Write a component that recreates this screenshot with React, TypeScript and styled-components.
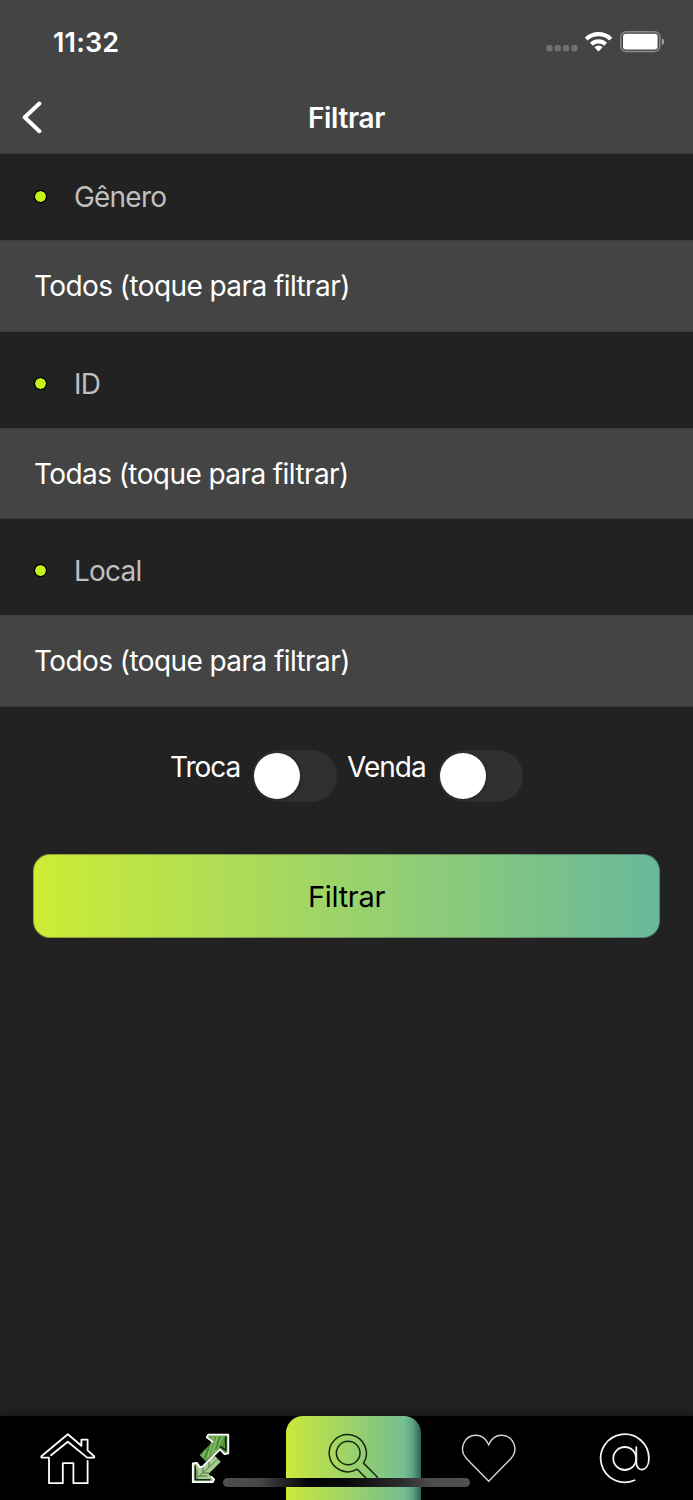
import React from "react";
import styled, { createGlobalStyle } from "styled-components";

const Global = createGlobalStyle`
  * { box-sizing: border-box; }
  body { margin: 0; background: #222; }
`;

const Screen = styled.div`
  position: relative;
  display: flex;
  flex-direction: column;
  width: 693px;
  height: 1500px;
  overflow: hidden;
  background: #222;
  color: #fff;
  font-family: Inter, "Liberation Sans", sans-serif;
  font-size: 28px;
  line-height: 34px;
`;

const Header = styled.header`
  height: 154px;
  background: #444;
  border-bottom: 1px solid #3a3a3a;
`;

const StatusBar = styled.div`
  display: flex;
  align-items: center;
  justify-content: space-between;
  height: 82px;
  padding: 2px 28px 0 53px;
`;

const Clock = styled.span`
  font-size: 27px;
  font-weight: 600;
  letter-spacing: 0.15px;
  padding-top: 1px;
`;

const TitleBar = styled.div`
  display: grid;
  grid-template-columns: 60px 1fr 60px;
  align-items: center;
  height: 71px;
`;

const BackButton = styled.button`
  display: flex;
  padding: 0 0 1px 20px;
  border: 0;
  background: none;
`;

const Title = styled.h1`
  margin: 0;
  font-size: 28px;
  font-weight: 600;
  letter-spacing: -0.35px;
  text-align: center;
`;

const SectionLabel = styled.div<{ $first?: boolean }>`
  display: flex;
  align-items: center;
  gap: 27px;
  height: ${(p) => (p.$first ? 86 : 96)}px;
  padding: ${(p) => (p.$first ? "0 34px 1px" : "8px 34px 0")};
  color: #bfbfbf;
  font-size: 28px;
  letter-spacing: -0.8px;
`;

const Dot = styled.i`
  width: 13px;
  height: 13px;
  margin-bottom: 1px;
  border: 1px solid #000;
  border-radius: 50%;
  background: #c4f21a;
  background-clip: padding-box;
  box-shadow: 0 0 1px #000;
`;

const FilterRow = styled.div<{ $height: number }>`
  display: flex;
  align-items: center;
  height: ${(p) => p.$height}px;
  padding: 0 34px;
  background: #444;
  border-top: 1px solid #3d3d3d;
  border-bottom: 1px solid #3a3a3a;
  letter-spacing: -0.58px;
`;

const Toggles = styled.div`
  display: flex;
  height: 147px;
  padding: 43px 0 0 170px;
`;

const ToggleLabel = styled.span<{ $width: number }>`
  width: ${(p) => p.$width}px;
  white-space: nowrap;
  letter-spacing: -1px;
`;

const Track = styled.span<{ $gap: number }>`
  width: 85px;
  height: 52px;
  margin-right: ${(p) => p.$gap}px;
  padding: 3px 2px;
  border-radius: 26px;
  background: #303030;
`;

const Knob = styled.span`
  display: block;
  width: 46px;
  height: 46px;
  border-radius: 50%;
  background: #fff;
  box-shadow: 0 1px 5px rgba(0, 0, 0, 0.3);
`;

const Submit = styled.button`
  height: 84px;
  margin: 0 33px;
  border: 1px solid rgba(60, 60, 60, 0.4);
  border-radius: 17px;
  background: linear-gradient(90deg, #cdec34, #9bd36b 50%, #68b89c) border-box;
  color: #000;
  font: 400 29px Inter, "Liberation Sans", sans-serif;
  letter-spacing: -0.3px;
`;

const NavBar = styled.nav`
  display: grid;
  grid-template-columns: 136px 150px 135px 136px 136px;
  height: 84px;
  margin-top: auto;
  background: #000;
  box-shadow: 0 0 14px rgba(0, 0, 0, 0.55);
`;

const NavItem = styled.a<{ $active?: boolean }>`
  display: flex;
  justify-content: center;
  padding-top: 16px;
  ${(p) =>
    p.$active &&
    `
    border-radius: 17px 17px 0 0;
    background:
      linear-gradient(90deg, rgba(15, 40, 35, 0) 88%, rgba(15, 40, 35, 0.18) 94%, rgba(15, 40, 35, 0.6)),
      linear-gradient(90deg, #cbe93b, #68b89c);
  `}
`;

const HomeIndicator = styled.div`
  position: absolute;
  left: 223px;
  bottom: 13px;
  width: 247px;
  height: 9px;
  border-radius: 5px;
  background: linear-gradient(90deg, #505050 0%, #454545 15%, #1c1c1c 27%, #000 36%, #080808 50%, #2c2c2c 72%, #4c4c4c 84%, #505050 100%);
`;

const SignalIcons = () => (
  <svg width="119" height="24" viewBox="546 30 119 24">
    <g fill="#707070">
      {[546.3, 554.6, 562.9, 571.3].map((x) => (
        <rect key={x} x={x} y="45.1" width="6.2" height="6.2" rx="1.8" />
      ))}
    </g>
    <g fill="none" stroke="#fff">
      <path d="M586.2 39.1a17.7 17.7 0 0 1 24.6 0" strokeWidth="4.1" />
      <path d="M591.4 44.2a10.3 10.3 0 0 1 14.2 0" strokeWidth="4.1" />
    </g>
    <path d="M598.5 51.6l-3.7-3.8q-.5-.6.2-1.1 3.5-2.3 7 0 .7.5.2 1.1z" fill="#fff" />
    <rect x="620.8" y="31.7" width="39" height="19.8" rx="5.4" fill="none" stroke="#8b8b8b" strokeWidth="1.5" />
    <rect x="623" y="33.8" width="34.6" height="15.6" rx="3" fill="#fff" />
    <path d="M661.8 38.2q2.5.9 2.5 3.5t-2.5 3.5z" fill="#9b9b9b" />
  </svg>
);

const HomeIcon = () => (
  <svg width="56" height="54" viewBox="40 32 56 54" fill="none" stroke="#fff" strokeWidth="1.8" strokeLinejoin="round" strokeLinecap="round">
    <path d="M51 55.2L67.8 41.8 87.2 57.6H94.2V56.2L87.6 50.4V39.6H81.4V45.8L67.8 34.2 41.4 56.2V57.6H49V83.2H62.8V63.2H73.4V83.2H87.6V61" />
  </svg>
);

const SwapIcon = () => (
  <svg width="42" height="54" viewBox="190 32 42 54" strokeLinejoin="round" strokeLinecap="round">
    <path d="M208.5 34.5H228.3V53.3L224.5 54 220 49.3 206 61.5 199.5 55 212.7 41.7 206.5 37z" fill="#5f9f48" />
    <path d="M192.8 63.3L197 62.7 201 67.3 215 56 220.7 61.7 208.5 74 214.3 79.3 213 82.3H192.8z" fill="#a9cc92" />
    <path d="M213 37L208 57M217.5 36L212 54M222 37L215 52M205 51L203 57" stroke="#8fc06a" strokeWidth="1.3" />
    <path d="M210 45L205 57M220 37L216 49M225 38L223 50" stroke="#397f31" strokeWidth="1.1" />
    <path d="M196 79L218 59M203 66V72M209 62V67M203 73H209M197 70V77M200 76H207" fill="none" stroke="#4c7b47" strokeWidth="1" />
    <path d="M225.8 37V50.5L220.5 46.5M195.3 66V79.8H210" fill="none" stroke="#15251a" strokeWidth="1.6" />
    <path d="M212.7 41.9L206.8 37.2 208.2 34.6H228.3V53.3L224.6 54.2 220 49.3 202.8 66.4 200 67.2 196.8 62.8 192.8 63.4V82.2H212.8L214.1 79.4 211.6 76.8" fill="none" stroke="#fff" strokeWidth="1.8" />
  </svg>
);

const SearchIcon = () => (
  <svg width="54" height="56" viewBox="327 32 54 56" fill="none" stroke="#16270f" strokeWidth="1.5">
    <circle cx="348.2" cy="53" r="11.8" />
    <path d="M357.2 69.2l12.4 12.6q4.4 3.6 7.3.7 2.7-3-.8-6.7L363.5 63.1A18.6 18.6 0 1 0 357.2 69.2z" strokeLinejoin="round" />
  </svg>
);

const HeartIcon = () => (
  <svg width="56" height="52" viewBox="461 32 56 52" fill="none" stroke="#d6d6d6" strokeWidth="1.4">
    <path d="M488.7 81.2L466.4 58.5C457.9 48.8 464.8 35.3 475.7 35.3c6.2 0 10.3 3.4 13 9.5 2.7-6.1 6.8-9.5 13-9.5 10.9 0 17.8 13.5 9.3 23.2z" />
  </svg>
);

const AtIcon = () => (
  <svg width="52" height="54" viewBox="599 32 52 54" fill="none" stroke="#f3f3f3" strokeWidth="1.8" strokeLinecap="round">
    <circle cx="624.8" cy="58.5" r="11.5" />
    <path d="M636.3 47.2V62.5c0 10.3 12.6 9.7 12.6-4A24.1 24.1 0 1 0 634.5 80.3" />
  </svg>
);

const sections = [
  { label: "Gênero", value: "Todos (toque para filtrar)", height: 92 },
  { label: "ID", value: "Todas (toque para filtrar)", height: 91 },
  { label: "Local", value: "Todos (toque para filtrar)", height: 92 },
];

export default function App() {
  return (
    <Screen>
      <Global />
      <Header>
        <StatusBar>
          <Clock>11:32</Clock>
          <SignalIcons />
        </StatusBar>
        <TitleBar>
          <BackButton aria-label="Voltar">
            <svg width="24" height="34" viewBox="20 100 24 34" fill="none" stroke="#fff" strokeWidth="4" strokeLinecap="round" strokeLinejoin="round">
              <path d="M39.4 103.5L24.7 117.3 39.4 131.2" />
            </svg>
          </BackButton>
          <Title>Filtrar</Title>
        </TitleBar>
      </Header>
      {sections.map((s, i) => (
        <React.Fragment key={s.label}>
          <SectionLabel $first={i === 0}>
            <Dot />
            {s.label}
          </SectionLabel>
          <FilterRow $height={s.height}>{s.value}</FilterRow>
        </React.Fragment>
      ))}
      <Toggles>
        <ToggleLabel $width={82}>Troca</ToggleLabel>
        <Track $gap={10}>
          <Knob />
        </Track>
        <ToggleLabel $width={91}>Venda</ToggleLabel>
        <Track $gap={0}>
          <Knob />
        </Track>
      </Toggles>
      <Submit>Filtrar</Submit>
      <NavBar>
        <NavItem><HomeIcon /></NavItem>
        <NavItem><SwapIcon /></NavItem>
        <NavItem $active><SearchIcon /></NavItem>
        <NavItem><HeartIcon /></NavItem>
        <NavItem><AtIcon /></NavItem>
      </NavBar>
      <HomeIndicator />
    </Screen>
  );
}
